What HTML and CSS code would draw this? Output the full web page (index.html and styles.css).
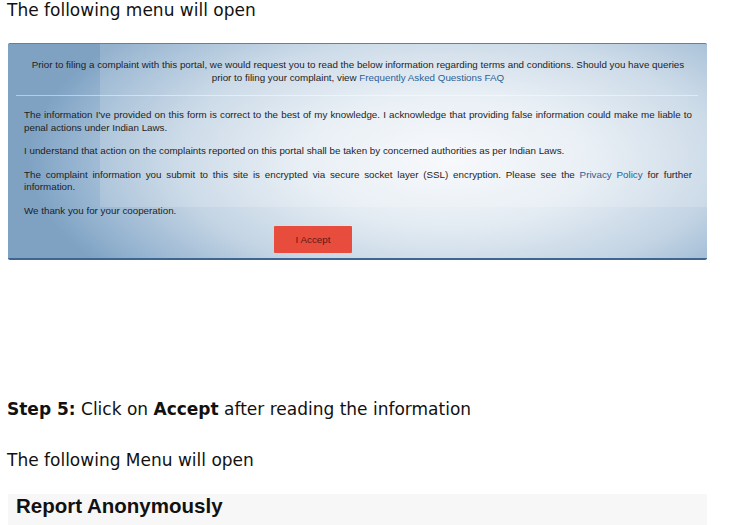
FILE: index.html
```html
<!DOCTYPE html>
<html>
<head>
<meta charset="utf-8">
<link rel="stylesheet" href="styles.css">
</head>
<body>
<p class="txt first">The following menu will open</p>
<div class="shot">
  <p class="lead">Prior to filing a complaint with this portal, we would request you to read the below information regarding terms and conditions. Should you have queries prior to filing your complaint, view <a class="lnk">Frequently Asked Questions FAQ</a></p>
  <hr class="sep">
  <p class="para">The information I've provided on this form is correct to the best of my knowledge. I acknowledge that providing false information could make me liable to penal actions under Indian Laws.</p>
  <p class="para">I understand that action on the complaints reported on this portal shall be taken by concerned authorities as per Indian Laws.</p>
  <p class="para">The complaint information you submit to this site is encrypted via secure socket layer (SSL) encryption. Please see the <a class="lnk">Privacy Policy</a> for further information.</p>
  <p class="para">We thank you for your cooperation.</p>
  <div class="btnrow"><span class="btn">I Accept</span></div>
</div>
<p class="txt step"><b>Step 5:</b> Click on <b>Accept</b> after reading the information</p>
<p class="txt menu">The following Menu will open</p>
<div class="bar"><h2 class="bartitle">Report Anonymously</h2></div>
</body>
</html>
```
FILE: styles.css
```css
html, body { margin: 0; padding: 0; background: #fff; }
body { padding: 0 7px; overflow: hidden; height: 525px; }
.txt {
  font-family: "DejaVu Sans", Verdana, sans-serif;
  font-size: 17px;
  line-height: 20px;
  color: #111;
  margin: 0;
}
.shot {
  margin: 23px 0 0 1px;
  width: 699px;
  height: 217px;
  box-sizing: border-box;
  border-top: 1px solid #5d82a8;
  border-bottom: 2px solid #3f6690;
  padding: 15px 15px 0 16px;
  font-family: "Liberation Sans", Arial, sans-serif;
  font-size: 9.8px;
  line-height: 12.5px;
  color: #1e1e1e;
  background:
    linear-gradient(rgba(255,255,255,0.16), rgba(255,255,255,0.16)) 92px 0 / 607px 163px no-repeat,
    radial-gradient(ellipse 420px 190px at 440px 115px, #f6f8fb 0%, #e4ecf3 35%, #c3d4e4 65%, #93b2cf 90%, #7fa2c3 100%);
  background-color: #86a8c8;
  border-radius: 2px;
}
.lead { margin: 0; text-align: center; }
.lnk { color: #2c5f95; text-decoration: none; }
.sep {
  border: 0;
  height: 1px;
  background: rgba(255,255,255,0.45);
  margin: 11px -6px 13px -8px;
}
.para { margin: 0 0 11px; text-align: justify; }
.btnrow { margin-top: -2px; padding: 0 0 0 250px; }
.btn {
  display: inline-block;
  width: 78px;
  height: 27px;
  line-height: 27px;
  text-align: center;
  background: #e84c3d;
  color: #5a1a12;
  border-radius: 1px;
}
.step { margin-top: 139px; }
.menu { margin-top: 31px; }
.bar {
  margin: 24px 0 0 1px;
  width: 699px;
  height: 31px;
  background: #f7f7f7;
  padding-left: 8px;
  box-sizing: border-box;
}
.bartitle {
  margin: 0;
  font-family: "Liberation Sans", Arial, sans-serif;
  font-weight: bold;
  font-size: 20.5px;
  line-height: 24px;
  color: #111;
}
```
